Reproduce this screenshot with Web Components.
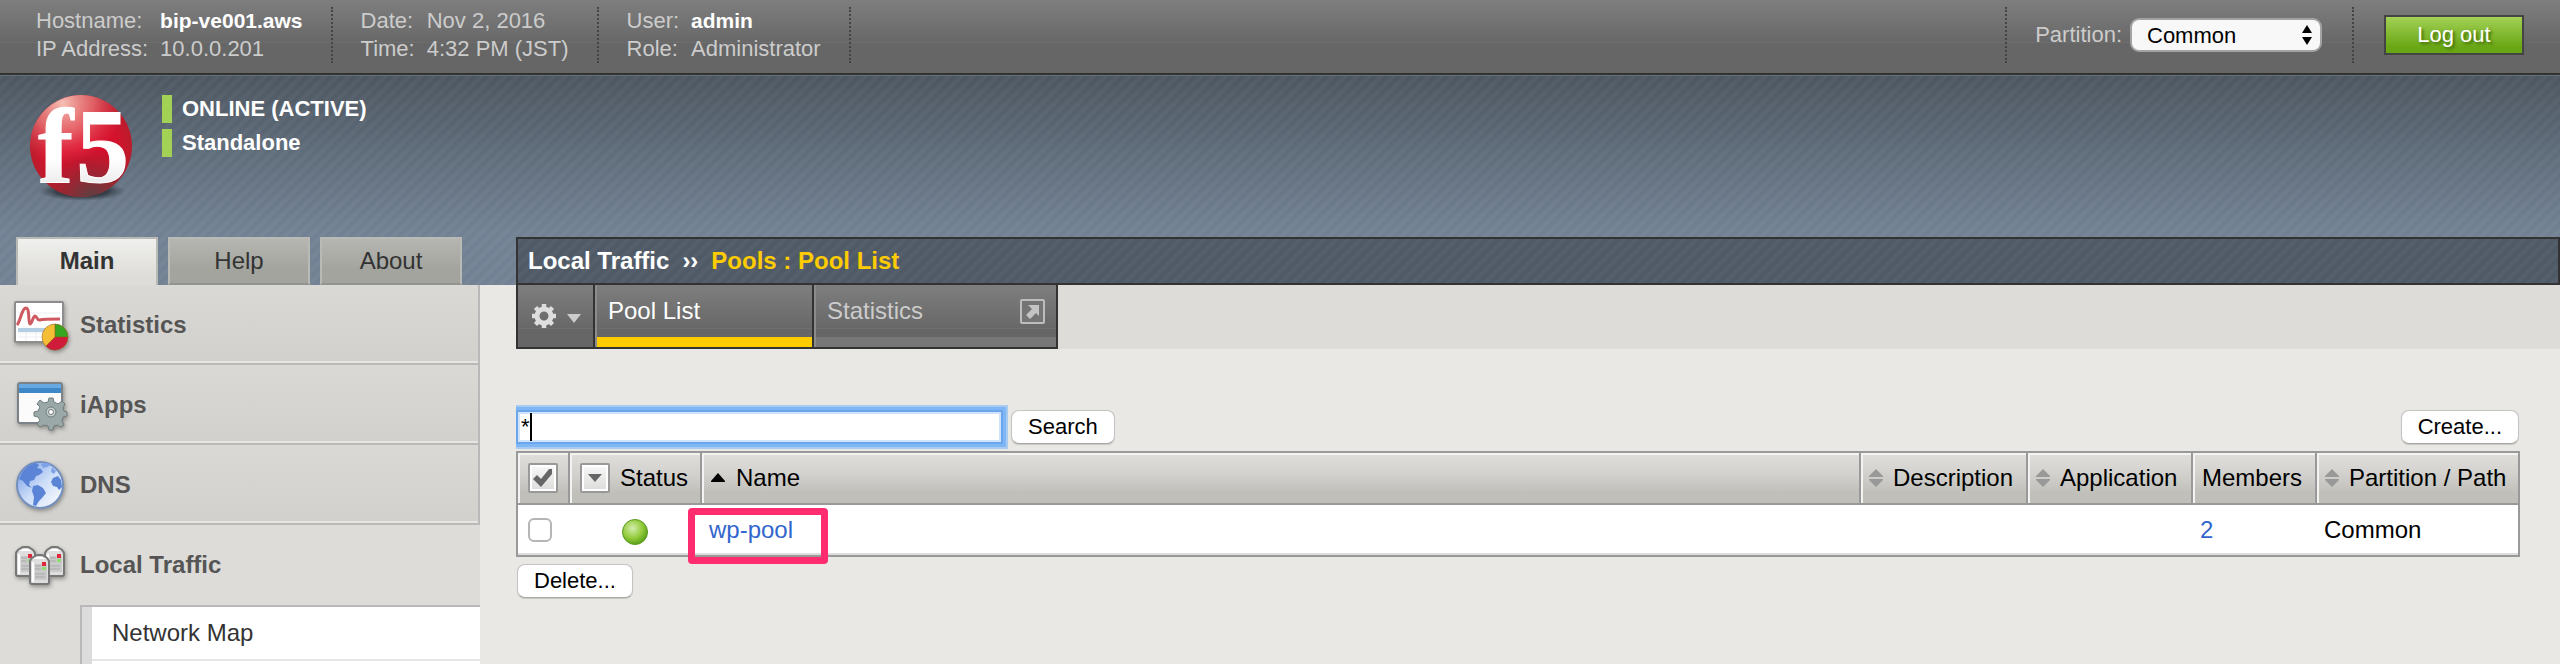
<!DOCTYPE html>
<html lang="en">
<head>
<meta charset="utf-8">
<title>BIG-IP - Pool List</title>
<style>
  html, body {
    margin: 0;
    height: 100%;
  }

  body {
    overflow: hidden;
    background: #e9e8e4;
    font-family: "Liberation Sans", Arial, sans-serif;
    font-size: 24px;
    line-height: 28px;
    color: #000;
  }
</style>
</head>
<body>
<bigip-app></bigip-app>

<script>
// Diagonal weave shared by the masthead and the breadcrumb bar
const STRIPES = `linear-gradient(135deg,
  rgba(255,255,255,.03) 0 25%, transparent 25% 50%,
  rgba(255,255,255,.03) 50% 75%, transparent 75%) 0 0 / 12px 12px`;

class BigipApp extends HTMLElement {
  constructor() {
    super();
    this.attachShadow({ mode: 'open' });
  }

  connectedCallback() {
    this.shadowRoot.innerHTML = `
      <style>
        :host {
          display: flex;
          flex-direction: column;
          height: 100vh;
        }
        .body {
          flex: 1;
          display: grid;
          grid-template-columns: 480px 1fr;
          column-gap: 36px;
          min-height: 0;
        }
      </style>
      <top-bar>
        <info-block>
          <span slot="key1">Hostname:</span><b slot="value1">bip-ve001.aws</b>
          <span slot="key2">IP Address:</span><span slot="value2">10.0.0.201</span>
        </info-block>
        <info-block>
          <span slot="key1">Date:</span><span slot="value1">Nov 2, 2016</span>
          <span slot="key2">Time:</span><span slot="value2">4:32 PM (JST)</span>
        </info-block>
        <info-block>
          <span slot="key1">User:</span><b slot="value1">admin</b>
          <span slot="key2">Role:</span><span slot="value2">Administrator</span>
        </info-block>
      </top-bar>
      <mast-head>
        <device-status slot="status">ONLINE (ACTIVE)</device-status>
        <device-status slot="status">Standalone</device-status>
        <nav-tab slot="tabs" active>Main</nav-tab>
        <nav-tab slot="tabs">Help</nav-tab>
        <nav-tab slot="tabs">About</nav-tab>
        <bread-crumb slot="crumb">Local Traffic<span slot="page">Pools : Pool List</span></bread-crumb>
      </mast-head>
      <div class="body">
        <side-nav></side-nav>
        <pool-page></pool-page>
      </div>
    `;
  }
}

class TopBar extends HTMLElement {
  constructor() {
    super();
    this.attachShadow({ mode: 'open' });
  }

  connectedCallback() {
    this.shadowRoot.innerHTML = `
      <style>
        :host {
          display: flex;
          justify-content: space-between;
          padding: 7px 36px 10px 8px;
          border-bottom: 2px solid #333;
          background: linear-gradient(#7e7e7e, #686868 42px, #6e6e6e 42px, #6e6e6e 43px, #666 43px);
          color: #ccc;
          font-size: 22px;
        }
        .info, .actions, .partition {
          display: flex;
        }
        .actions, .partition {
          align-items: center;
        }
        .partition {
          height: 56px;
          gap: 8px;
          padding: 0 30px 0 28px;
          margin-right: 30px;
          border: dotted #444;
          border-width: 0 2px;
        }
        select {
          appearance: none;
          width: 192px;
          height: 34px;
          padding: 0 15px;
          border: 2px solid #a3a3a3;
          border-radius: 9px;
          background: #f8f8f8 url("data:image/svg+xml,%3Csvg xmlns='http://www.w3.org/2000/svg' width='10' height='20'%3E%3Cpath d='M5 0l5 8H0zM5 20l5-8H0z'/%3E%3C/svg%3E") no-repeat right 8px center;
          font: 22px "Liberation Sans", Arial, sans-serif;
          color: #000;
        }
        button {
          width: 140px;
          height: 40px;
          padding: 0;
          border: 2px solid #444;
          background: linear-gradient(#a2d155, #69a614 85%);
          font: 22px "Liberation Sans", Arial, sans-serif;
          color: #fff;
          text-shadow: 2px 2px 3px #3f6a08;
        }
      </style>
      <div class="info"><slot></slot></div>
      <div class="actions">
        <div class="partition">
          <label for="partition">Partition:</label>
          <select id="partition"><option>Common</option></select>
        </div>
        <button type="button">Log out</button>
      </div>
    `;
  }
}

class InfoBlock extends HTMLElement {
  constructor() {
    super();
    this.attachShadow({ mode: 'open' });
  }

  connectedCallback() {
    this.shadowRoot.innerHTML = `
      <style>
        :host {
          display: grid;
          grid-template-columns: max-content max-content;
          column-gap: 12px;
          padding: 0 28px;
          border-right: 2px dotted #444;
        }
        ::slotted(b) {
          color: #fff;
          font-size: 21px;
        }
      </style>
      <slot name="key1"></slot><slot name="value1"></slot>
      <slot name="key2"></slot><slot name="value2"></slot>
    `;
  }
}

class MastHead extends HTMLElement {
  constructor() {
    super();
    this.attachShadow({ mode: 'open' });
  }

  connectedCallback() {
    this.shadowRoot.innerHTML = `
      <style>
        :host {
          display: block;
          background: ${STRIPES}, linear-gradient(#4d5761, #728294 75%, #728294);
          box-shadow: inset 0 1px #66717c;
        }
        .brand {
          display: flex;
          gap: 30px;
          padding: 20px 30px 36px;
        }
        .brand svg {
          display: block;
          overflow: visible;
        }
        .status {
          display: flex;
          flex-direction: column;
          gap: 6px;
        }
        .bottom {
          display: grid;
          grid-template-columns: 480px 1fr;
          column-gap: 36px;
        }
        nav {
          display: flex;
          gap: 10px;
          padding-left: 16px;
        }
      </style>
      <div class="brand">
        <svg width="102" height="106" viewBox="0 0 102 106" role="img" aria-label="F5">
          <defs>
            <radialGradient id="ball" cx=".5" cy=".5" r=".55">
              <stop offset="0" stop-color="#e00b2c"/>
              <stop offset=".65" stop-color="#d3122c"/>
              <stop offset="1" stop-color="#b0202c"/>
            </radialGradient>
            <radialGradient id="shine" cx=".32" cy=".08" r=".6">
              <stop offset="0" stop-color="#f6c0b6"/>
              <stop offset=".5" stop-color="#ea7f7c" stop-opacity=".7"/>
              <stop offset="1" stop-color="#e04050" stop-opacity="0"/>
            </radialGradient>
            <radialGradient id="dark" cx=".6" cy="1" r=".5">
              <stop offset="0" stop-color="#5c4042"/>
              <stop offset="1" stop-color="#7c2c30" stop-opacity="0"/>
            </radialGradient>
            <radialGradient id="ground">
              <stop offset="0" stop-color="#20262c"/>
              <stop offset=".6" stop-color="#2b323a" stop-opacity=".8"/>
              <stop offset="1" stop-color="#3c454e" stop-opacity="0"/>
            </radialGradient>
            <linearGradient id="ink" x2="0" y2="1">
              <stop offset=".6" stop-color="#fff"/>
              <stop offset="1" stop-color="#dcdcdc"/>
            </linearGradient>
          </defs>
          <ellipse cx="52" cy="96" rx="44" ry="10" fill="url(#ground)"/>
          <circle cx="51" cy="51" r="51" fill="url(#ball)"/>
          <circle cx="51" cy="51" r="51" fill="url(#dark)"/>
          <circle cx="51" cy="51" r="51" fill="url(#shine)"/>
          <text x="8 46" y="87" font-family="Liberation Serif, serif" font-weight="bold" font-size="106" fill="url(#ink)" stroke="#fff">f5</text>
        </svg>
        <div class="status"><slot name="status"></slot></div>
      </div>
      <div class="bottom">
        <nav><slot name="tabs"></slot></nav>
        <slot name="crumb"></slot>
      </div>
    `;
  }
}

class DeviceStatus extends HTMLElement {
  constructor() {
    super();
    this.attachShadow({ mode: 'open' });
  }

  connectedCallback() {
    this.shadowRoot.innerHTML = `
      <style>
        :host {
          display: block;
          padding-left: 10px;
          border-left: 10px solid #a2d155;
          color: #fff;
          font-size: 22px;
          font-weight: bold;
        }
      </style>
      <slot></slot>
    `;
  }
}

class NavTab extends HTMLElement {
  constructor() {
    super();
    this.attachShadow({ mode: 'open' });
  }

  connectedCallback() {
    this.shadowRoot.innerHTML = `
      <style>
        :host {
          display: block;
        }
        a {
          display: flex;
          justify-content: center;
          box-sizing: border-box;
          width: 142px;
          height: 48px;
          padding-top: 8px;
          border: 2px solid #b9b9b6;
          border-bottom-color: #93938f;
          background: linear-gradient(#b5b6b1, #a3a49e 70%);
          color: #333;
          text-decoration: none;
        }
        :host([active]) a {
          border-bottom: 0;
          background: linear-gradient(#efefed, #dddcd8 85%);
          font-weight: bold;
        }
      </style>
      <a href="#"><slot></slot></a>
    `;
  }
}

class BreadCrumb extends HTMLElement {
  constructor() {
    super();
    this.attachShadow({ mode: 'open' });
  }

  connectedCallback() {
    this.shadowRoot.innerHTML = `
      <style>
        :host {
          display: flex;
          align-items: center;
          gap: 13px;
          padding: 0 10px;
          border: 2px solid #333;
          background: ${STRIPES}, #4f5a66;
          color: #fff;
          font-weight: bold;
        }
        ::slotted(span) {
          color: #fc0;
        }
      </style>
      <span><slot></slot></span><span>››</span><slot name="page"></slot>
    `;
  }
}

class SideNav extends HTMLElement {
  constructor() {
    super();
    this.attachShadow({ mode: 'open' });
  }

  connectedCallback() {
    this.shadowRoot.innerHTML = `
      <style>
        :host {
          display: flex;
          flex-direction: column;
          min-height: 0;
          background: #dddcd8;
        }
        svg {
          display: block;
          filter: drop-shadow(1px 2px 2px rgba(0,0,0,.35));
        }
        .sub {
          flex: 1 0 auto;
          margin: 0 0 0 80px;
          padding: 0;
          list-style: none;
          border: solid #b9b9b9;
          border-width: 2px 0 0 2px;
          background: linear-gradient(90deg, #dcdcdc 10px, #fff 10px);
        }
        .sub a {
          display: block;
          margin-left: 10px;
          padding: 12px 20px;
          border-bottom: 2px solid #e6e6e6;
          color: #333;
          text-decoration: none;
        }
      </style>
      <nav-item>
        <svg slot="icon" width="56" height="52" viewBox="0 0 56 52">
          <rect x="1" y="3" width="48" height="40" rx="1" fill="#fff" stroke="#8d8d8d" stroke-width="2"/>
          <path d="M4 14h43M4 34h43M4 38h43M12 28v14M22 28v14" stroke="#eceff2" fill="none"/>
          <path d="M4 31h40" stroke="#b4cfe4" stroke-width="4"/>
          <path d="M3 26C6 23 8 9 12 9s2 16 4 16 3-8 5-8 2 5 5 4 8-1 20-1" fill="none" stroke="#cf5960" stroke-width="3"/>
          <circle cx="41" cy="38" r="13" fill="#f4bf36"/>
          <path d="M41 38V25a13 13 0 0 1 13 13z" fill="#36a520"/>
          <path d="M41 38h13a13 13 0 0 1-22.200 9.200z" fill="#d01b3a"/>
          <path d="M41 25v13h13M41 38l-9 9" stroke="#8a5a14" stroke-opacity=".6" fill="none"/>
          <circle cx="41" cy="38" r="13" fill="none" stroke="#8a5520" stroke-opacity=".5"/>
        </svg>
        Statistics
      </nav-item>
      <nav-item>
        <svg slot="icon" width="56" height="52" viewBox="0 0 56 52">
          <rect x="4" y="4" width="44" height="40" rx="2" fill="#fbfbfc" stroke="#7b8288" stroke-width="2"/>
          <path d="M5 5h42v9H5z" fill="#3f88c8"/>
          <path d="M5 5h42v4H5z" fill="#66a9e2"/>
          <g transform="translate(37 33)" fill="#9aa9a8" stroke="#6f7c7c">
            <path d="M-2-14h4l1 4 4 2 4-3 3 3-2 4 1 3 3 1v4l-4 1-1 4 2 4-3 2-4-2-3 1-1 4h-4l-1-4-4-1-4 2-3-3 3-4-2-3-4-1v-4l4-1 2-4-3-3 3-4 4 3 4-1z"/>
            <circle r="5" fill="#c5cecd"/>
            <circle r="2.500" fill="#fff"/>
          </g>
        </svg>
        iApps
      </nav-item>
      <nav-item>
        <svg slot="icon" width="56" height="52" viewBox="0 0 56 52">
          <defs>
            <linearGradient id="sea" x2="1" y2="1">
              <stop offset="0" stop-color="#6d96e4"/>
              <stop offset=".5" stop-color="#cbdcf8"/>
              <stop offset="1" stop-color="#fff"/>
            </linearGradient>
          </defs>
          <circle cx="26" cy="26" r="23" fill="url(#sea)" stroke="#7490bf" stroke-width="2"/>
          <path d="M8 14c3-5 8-9 14-10l3 2-2 3 4 1 2 3-4 3-3 1-2 4-4 1-1 4 3 3-5-2-4-5-4-2z" fill="#5b84d6"/>
          <path d="M27 5l7-1 3 2-4 2-4 1z" fill="#7fa2e6"/>
          <path d="M38 8l4 4-2 3-3-2z" fill="#7fa2e6"/>
          <path d="M19 27l5-1 5 3 3 5-4 5-3 3-3 5-3-1 1-8-2-6z" fill="#5b84d6"/>
          <path d="M39 19l5-2 3 4 1 7-3 3-2-3-4-1-2-4z" fill="#5b84d6"/>
        </svg>
        DNS
      </nav-item>
      <nav-item open>
        <svg slot="icon" width="56" height="52" viewBox="0 0 56 52">
          <defs>
            <g id="server">
              <path d="M1 8q0-2 2-4l3-2q1-1 3-1h3q2 0 3 1l3 2q2 2 2 4v20q0 2-2 2H3q-2 0-2-2z" fill="#dedede" stroke="#777" stroke-width="2"/>
              <path d="M3 8h2v20H3zM4 5l4-2h5l4 2z" fill="#fff"/>
              <path d="M6 10h12v16H6z" fill="#cacaca"/>
              <path d="M6 12h6M6 15h6M6 20h10M6 23h10" stroke="#a8a8a8"/>
              <path d="M13 8h4v4h-4z" fill="#e0263c"/>
              <path d="M13 13h4v3h-4z" fill="#8ddc72"/>
            </g>
          </defs>
          <use href="#server" x="1" y="7"/>
          <use href="#server" x="30" y="7"/>
          <use href="#server" x="15" y="15"/>
        </svg>
        Local Traffic
      </nav-item>
      <ul class="sub">
        <li><a href="#">Network Map</a></li>
      </ul>
    `;
  }
}

class NavItem extends HTMLElement {
  constructor() {
    super();
    this.attachShadow({ mode: 'open' });
  }

  connectedCallback() {
    this.shadowRoot.innerHTML = `
      <style>
        :host {
          display: block;
          flex: none;
        }
        a {
          display: flex;
          align-items: center;
          gap: 10px;
          box-sizing: border-box;
          height: 80px;
          padding: 2px 14px 0;
          border: solid #b9b9b9;
          border-width: 0 2px 2px 0;
          background: linear-gradient(#dad9d5, #d1d0cc);
          box-shadow: inset 0 -2px #e6e5e1;
          color: #555;
          font-weight: bold;
          text-decoration: none;
        }
        :host([open]) a {
          border-color: transparent;
          background: none;
          box-shadow: none;
        }
      </style>
      <a href="#"><slot name="icon"></slot><span><slot></slot></span></a>
    `;
  }
}

class PoolPage extends HTMLElement {
  constructor() {
    super();
    this.attachShadow({ mode: 'open' });
  }

  connectedCallback() {
    this.shadowRoot.innerHTML = `
      <style>
        :host {
          display: block;
          min-width: 0;
        }
        .content {
          display: flex;
          flex-direction: column;
          align-items: flex-start;
          gap: 7px;
          padding: 61px 40px 0 0;
        }
        .toolbar {
          display: flex;
          align-self: stretch;
          gap: 8px;
        }
        .toolbar :last-child {
          margin-left: auto;
          margin-right: 1px;
        }
        .below {
          padding-left: 1px;
        }
      </style>
      <menu-bar></menu-bar>
      <div class="content">
        <div class="toolbar">
          <search-field></search-field>
          <form-button>Search</form-button>
          <form-button>Create...</form-button>
        </div>
        <pool-table></pool-table>
        <div class="below"><form-button>Delete...</form-button></div>
      </div>
    `;
  }
}

class MenuBar extends HTMLElement {
  constructor() {
    super();
    this.attachShadow({ mode: 'open' });
  }

  connectedCallback() {
    this.shadowRoot.innerHTML = `
      <style>
        :host {
          display: block;
          background: #dddcd8;
        }
        nav {
          display: flex;
          width: max-content;
          border: solid #333;
          border-width: 0 0 2px 2px;
        }
        button, a {
          box-sizing: border-box;
          height: 62px;
          border: 0;
          border-right: 2px solid #333;
          background: linear-gradient(#7e7e7e, #686868 43px, #6e6e6e 43px, #6e6e6e 44px, #666 44px);
        }
        button {
          display: flex;
          align-items: center;
          gap: 10px;
          width: 77px;
          padding: 0 0 0 13px;
        }
        button svg:last-child {
          margin-top: 4px;
        }
        a {
          display: flex;
          justify-content: space-between;
          width: 219px;
          padding: 12px 11px 0 11px;
          border-left: 2px solid #8b8b8b;
          box-shadow: inset 0 -10px #777;
          color: #ccc;
          font-size: 24px;
          text-decoration: none;
        }
        a.active {
          color: #fff;
          box-shadow: inset 0 -10px #fc0;
        }
        a.wide {
          width: 244px;
        }
        a svg {
          margin-top: 2px;
        }
      </style>
      <nav>
        <button type="button" aria-label="Options">
          <svg width="26" height="26" viewBox="-13 -13 26 26" fill="none" stroke="#dedede">
            <circle r="7" stroke-width="5"/>
            <path d="M0-12v4M0 12V8M-12 0h4M12 0H8M-8.500-8.500l3 3M8.500 8.500l-3-3M-8.500 8.500l3-3M8.500-8.500l-3 3" stroke-width="4.500"/>
          </svg>
          <svg width="14" height="9" viewBox="0 0 14 9"><path d="M0 0h14L7 9z" fill="#ccc"/></svg>
        </button>
        <a class="active" href="#">Pool List</a>
        <a class="wide" href="#">Statistics
          <svg width="25" height="25" viewBox="0 0 25 25" aria-hidden="true">
            <rect x="1" y="1" width="23" height="23" rx="1" fill="#757575" stroke="#bdbdbd" stroke-width="2"/>
            <path d="M8 6h11v11l-3-3-6 6-4-4 6-6z" fill="#c4c4c4"/>
          </svg>
        </a>
      </nav>
    `;
  }
}

class SearchField extends HTMLElement {
  constructor() {
    super();
    this.attachShadow({ mode: 'open' });
  }

  connectedCallback() {
    this.shadowRoot.innerHTML = `
      <style>
        :host {
          display: block;
          position: relative;
          width: 487px;
          clip-path: inset(-8px -8px -8px 0);
        }
        input {
          box-sizing: border-box;
          width: 100%;
          height: 34px;
          padding: 0 3px;
          border: 2px solid #6ba6ec;
          outline: 0;
          background: #fff;
          box-shadow: inset 0 0 0 2px #cfe3fa, 0 0 0 3px #7fb6f5, 0 0 0 5px #a9cbf0;
          font: 22px "Liberation Sans", Arial, sans-serif;
          caret-color: transparent;
        }
        .caret {
          position: absolute;
          left: 14px;
          top: 3px;
          width: 2px;
          height: 28px;
          background: #000;
        }
      </style>
      <input type="text" value="*" aria-label="Search pools"><span class="caret"></span>
    `;
  }
}

class FormButton extends HTMLElement {
  constructor() {
    super();
    this.attachShadow({ mode: 'open' });
  }

  connectedCallback() {
    this.shadowRoot.innerHTML = `
      <style>
        :host {
          display: block;
        }
        button {
          display: block;
          height: 34px;
          padding: 0 16px;
          border: 1px solid #c4c4c4;
          border-bottom-color: #a8a8a8;
          border-radius: 8px;
          background: #fff;
          box-shadow: 0 1px 1px rgba(0,0,0,.15);
          font: 22px "Liberation Sans", Arial, sans-serif;
          color: #000;
        }
      </style>
      <button type="button"><slot></slot></button>
    `;
  }
}

class PoolTable extends HTMLElement {
  constructor() {
    super();
    this.attachShadow({ mode: 'open' });
  }

  connectedCallback() {
    const sort = `
      <svg width="14" height="18" viewBox="0 0 14 18" fill="#999" aria-hidden="true">
        <path d="M7 0l7 7v1H0V7zM7 18l7-7v-1H0v1z"/>
      </svg>`;

    this.shadowRoot.innerHTML = `
      <style>
        :host {
          display: block;
          align-self: stretch;
        }
        table {
          width: 100%;
          table-layout: fixed;
          border: 2px solid #999;
          border-spacing: 0;
          background: #fff;
        }
        th, td {
          box-sizing: border-box;
          padding: 0 7px;
          text-align: left;
          font-weight: normal;
          white-space: nowrap;
        }
        th {
          height: 52px;
          border: solid #999;
          border-width: 0 2px 2px 0;
          background: linear-gradient(#dfdeda, #d3d2ce 40%, #c0bfba 80%);
          box-shadow: inset 2px 2px #f3f3f1;
        }
        th:last-child {
          border-right: 0;
        }
        td {
          height: 50px;
          box-shadow: inset 0 -2px #ddd;
        }
        .select { width: 52px; }
        .status { width: 132px; }
        .description { width: 167px; }
        .application { width: 165px; }
        .members { width: 124px; }
        .partition { width: 201px; }
        .head {
          display: flex;
          align-items: center;
          gap: 10px;
        }
        .select, .status {
          padding-left: 10px;
        }
        .sort {
          padding-left: 1px;
        }
        th.members {
          padding-left: 9px;
        }
        th button {
          display: flex;
          justify-content: center;
          align-items: center;
          width: 30px;
          height: 30px;
          padding: 0;
          border: 2px solid #999;
          border-radius: 2px;
          background: linear-gradient(#f8f8f8, #dcdcda);
          box-shadow: inset 0 0 0 2px #fff;
        }
        input {
          appearance: none;
          display: block;
          width: 24px;
          height: 24px;
          margin: 0;
          border: 2px solid #b5b5b5;
          border-radius: 6px;
          background: #fff;
        }
        .dot {
          display: block;
          margin: 4px 0 0 42px;
        }
        a {
          color: #36c;
          text-decoration: none;
        }
        .marked {
          position: relative;
        }
        /* call-out drawn over the row */
        .marked::after {
          content: "";
          position: absolute;
          inset: -8px -35px -21px -21px;
          border: 7px solid #ff2d6f;
          border-radius: 4px;
          pointer-events: none;
        }
      </style>
      <table>
        <thead>
          <tr>
            <th class="select">
              <button type="button" aria-label="Select all">
                <svg width="20" height="20" viewBox="0 0 20 20"><path d="M0 11l4-4 4 4 8-10h3v5L8 19z" fill="#666"/></svg>
              </button>
            </th>
            <th class="status">
              <div class="head">
                <button type="button" aria-label="Filter by status">
                  <svg width="14" height="10" viewBox="0 0 14 10"><path d="M0 1h14L7 9z" fill="#666"/></svg>
                </button>
                Status
              </div>
            </th>
            <th class="name">
              <div class="head sort">
                <svg width="16" height="10" viewBox="0 0 16 10" aria-hidden="true"><path d="M8 0l7 8v1H1V8z"/></svg>
                Name
              </div>
            </th>
            <th class="description"><div class="head sort">${sort} Description</div></th>
            <th class="application"><div class="head sort">${sort} Application</div></th>
            <th class="members">Members</th>
            <th class="partition"><div class="head sort">${sort} Partition / Path</div></th>
          </tr>
        </thead>
        <tbody>
          <tr>
            <td class="select"><input type="checkbox" aria-label="Select wp-pool"></td>
            <td class="status">
              <svg class="dot" width="26" height="26" viewBox="0 0 26 26" role="img" aria-label="Available">
                <defs>
                  <radialGradient id="green" cx=".4" cy=".35" r=".65">
                    <stop offset="0" stop-color="#d3edb0"/>
                    <stop offset=".6" stop-color="#94cc3c"/>
                    <stop offset="1" stop-color="#5da21b"/>
                  </radialGradient>
                </defs>
                <circle cx="13" cy="13" r="12.500" fill="url(#green)" stroke="#579a22"/>
              </svg>
            </td>
            <td><span class="marked"><a href="#">wp-pool</a></span></td>
            <td></td>
            <td></td>
            <td><a href="#">2</a></td>
            <td>Common</td>
          </tr>
        </tbody>
      </table>
    `;
  }
}

customElements.define('top-bar', TopBar);
customElements.define('info-block', InfoBlock);
customElements.define('mast-head', MastHead);
customElements.define('device-status', DeviceStatus);
customElements.define('nav-tab', NavTab);
customElements.define('bread-crumb', BreadCrumb);
customElements.define('side-nav', SideNav);
customElements.define('nav-item', NavItem);
customElements.define('pool-page', PoolPage);
customElements.define('menu-bar', MenuBar);
customElements.define('search-field', SearchField);
customElements.define('form-button', FormButton);
customElements.define('pool-table', PoolTable);
customElements.define('bigip-app', BigipApp);
</script>
</body>
</html>
